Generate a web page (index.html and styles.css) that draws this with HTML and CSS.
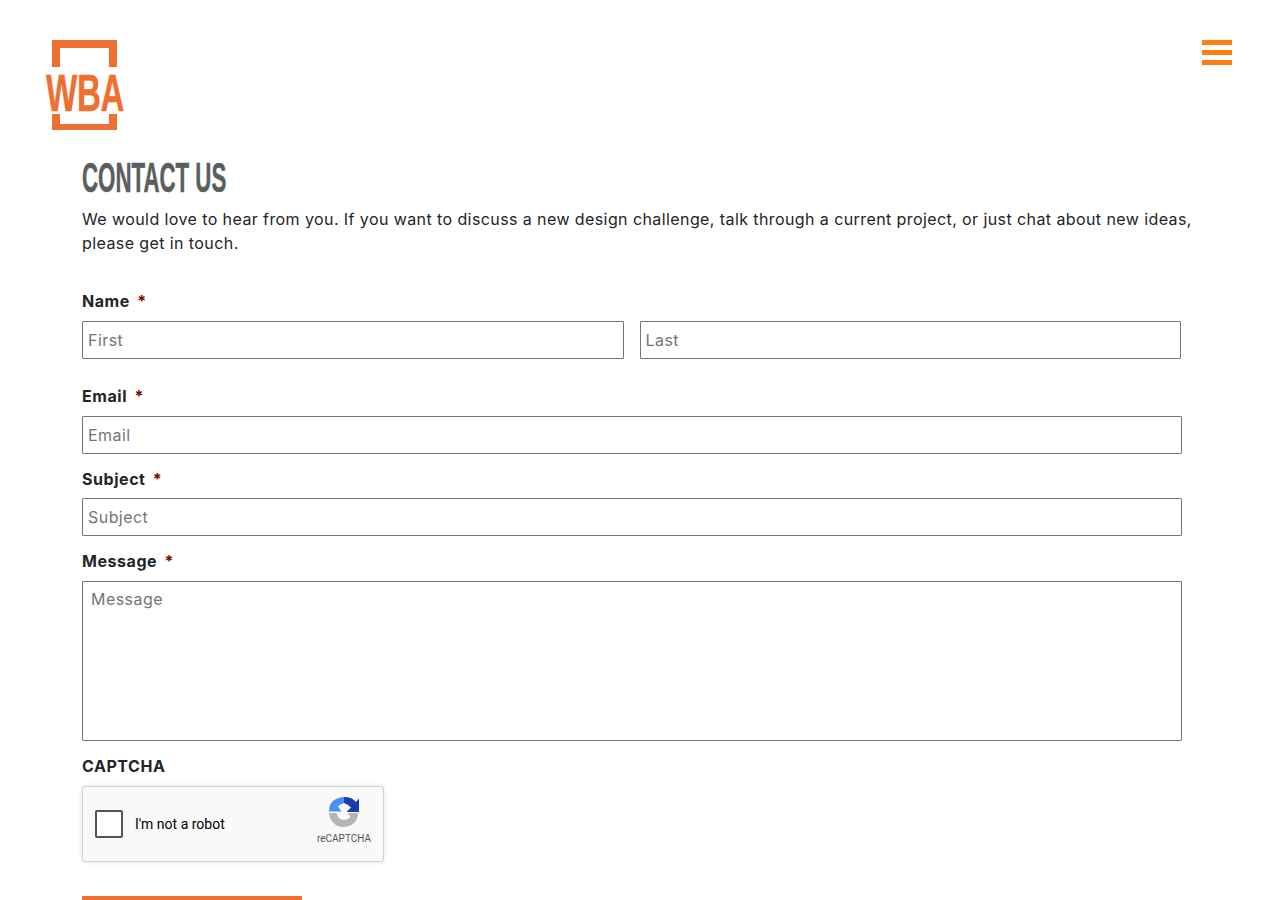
FILE: index.html
```html
<!DOCTYPE html>
<html lang="en">
<head>
<meta charset="utf-8">
<title>Contact Us</title>
<link rel="stylesheet" href="styles.css">
</head>
<body>
<header class="site-header">
  <a class="logo" href="#">
    <svg class="logo-frame" width="78" height="90" viewBox="0 0 78 90" aria-hidden="true">
      <path d="M6 27V0H71V27H63V8H14V27Z M6 74H14V84H63V74H71V90H6Z" fill="#ee7031"/>
    </svg>
    <span class="logo-text">WBA</span>
  </a>
  <button class="menu-btn" aria-label="Menu"><span></span><span></span><span></span></button>
</header>
<main class="content">
  <h1 class="title">CONTACT US</h1>
  <p class="intro">We would love to hear from you. If you want to discuss a new design challenge, talk through a current project, or just chat about new ideas, please get in touch.</p>
  <form class="form">
    <div class="field field-name">
      <label class="label">Name <span class="req">*</span></label>
      <div class="name-row">
        <input class="input" placeholder="First">
        <input class="input" placeholder="Last">
      </div>
    </div>
    <div class="field">
      <label class="label">Email <span class="req">*</span></label>
      <input class="input" placeholder="Email">
    </div>
    <div class="field field-subject">
      <label class="label">Subject <span class="req">*</span></label>
      <input class="input" placeholder="Subject">
    </div>
    <div class="field">
      <label class="label">Message <span class="req">*</span></label>
      <textarea class="input textarea" placeholder="Message"></textarea>
    </div>
    <div class="field">
      <label class="label">CAPTCHA</label>
      <div class="recaptcha">
        <span class="check"></span>
        <span class="robot">I'm not a robot</span>
        <span class="rc-brand">
          <svg width="32" height="32" viewBox="0 0 32 32" aria-hidden="true">
            <path d="M16 1V7Q12 8 10 10.5L13.5 15.5H1Q1 6 8 3Q12 1 16 1Z" fill="#4a90f5"/>
            <path d="M16 1Q24 1 28 6L31 2.5V16H18.5L23 11.5Q20 8 16 7Z" fill="#1c3aa9"/>
            <path d="M1 17H8.5Q10 24 16 24Q20 24 22.5 21L19.5 17H30Q30 24 25 28Q21 31 16 31Q9 31 5 26.5Q1 22 1 17Z" fill="#b5b5b5"/>
          </svg>
          <span class="rc-label">reCAPTCHA</span>
        </span>
      </div>
    </div>
    <button class="submit" type="button" aria-label="Submit"></button>
  </form>
</main>
</body>
</html>
```
FILE: styles.css
```css
html, body {
  margin: 0;
  height: 900px;
  overflow: hidden;
  background: #fff;
}
body {
  font-family: "Inter", "Liberation Sans", sans-serif;
  color: #212529;
}
.site-header {
  display: flex;
  justify-content: space-between;
  align-items: flex-start;
  height: 90px;
  padding: 40px 48px 0 46px;
}
.logo {
  position: relative;
  display: block;
  width: 78px;
  height: 90px;
  text-decoration: none;
}
.logo-frame { display: block; }
.logo-text {
  position: absolute;
  left: 0;
  top: 29px;
  white-space: nowrap;
  font-family: "Liberation Sans", sans-serif;
  font-weight: 700;
  font-size: 51px;
  line-height: 50px;
  color: #ee7031;
  letter-spacing: -0.5px;
  -webkit-text-stroke: .4px #ee7031;
  transform: scaleX(.65);
  transform-origin: left center;
}
.menu-btn {
  display: flex;
  flex-direction: column;
  gap: 5px;
  width: 30px;
  padding: 0;
  border: 0;
  background: none;
}
.menu-btn span {
  display: block;
  height: 5px;
  width: 30px;
  background: #fd7e14;
}
.content {
  padding: 26px 88px 0 82px;
}
.title {
  margin: 0;
  font-family: "Liberation Sans", sans-serif;
  font-weight: 700;
  font-size: 42px;
  line-height: 44px;
  color: #5a5e5e;
  white-space: nowrap;
  -webkit-text-stroke: .5px #5a5e5e;
  transform: scaleX(.53);
  transform-origin: left center;
}
.intro {
  margin: 7px 0 0;
  font-size: 16px;
  line-height: 24px;
  letter-spacing: 0.41px;
  color: #212529;
}
.form { margin-top: 34px; }
.field {
  margin-bottom: 13px;
  width: 1100px;
}
.field-name { margin-bottom: 25px; }
.label {
  display: block;
  font-size: 16px;
  font-weight: 700;
  line-height: 24px;
  letter-spacing: .55px;
  margin-bottom: 8px;
}
.field-subject .label { margin-bottom: 7px; }
.req {
  color: #790000;
  margin-left: 3px;
}
.name-row {
  display: flex;
  gap: 16px;
  width: 1099px;
}
.name-row .input { flex: 1 1 0; min-width: 0; }
.input {
  display: block;
  box-sizing: border-box;
  width: 100%;
  height: 38px;
  padding: 0 5px 1px;
  border: 1px solid #767676;
  border-radius: 1px;
  font-family: inherit;
  font-size: 16px;
  letter-spacing: 0.45px;
  background: #fff;
  color: #212529;
  outline: 0;
}
.input::placeholder { color: #757575; opacity: 1; }
.textarea {
  height: 160px;
  padding: 5px 8px;
  line-height: 24px;
  resize: none;
}
.recaptcha {
  display: flex;
  align-items: center;
  box-sizing: border-box;
  width: 302px;
  height: 76px;
  border: 1px solid #d3d3d3;
  border-radius: 3px;
  background: #f9f9f9;
  box-shadow: 0 0 4px 1px rgba(0, 0, 0, .08);
  font-family: Roboto, "Liberation Sans", sans-serif;
  padding-left: 12px;
}
.check {
  box-sizing: border-box;
  width: 28px;
  height: 28px;
  border: 2px solid #555;
  border-radius: 2px;
  background: #fff;
}
.robot {
  margin-left: 12px;
  font-size: 14px;
  color: #000;
}
.rc-brand {
  margin-left: auto;
  width: 70px;
  margin-right: 4px;
  display: flex;
  flex-direction: column;
  align-items: center;
  gap: 4px;
  margin-top: -7px;
}
.rc-label {
  font-size: 10px;
  line-height: 13px;
  color: #555;
}
.submit {
  display: block;
  width: 220px;
  height: 50px;
  margin-top: 34px;
  border: 0;
  padding: 0;
  background: #ee7031;
}
```
